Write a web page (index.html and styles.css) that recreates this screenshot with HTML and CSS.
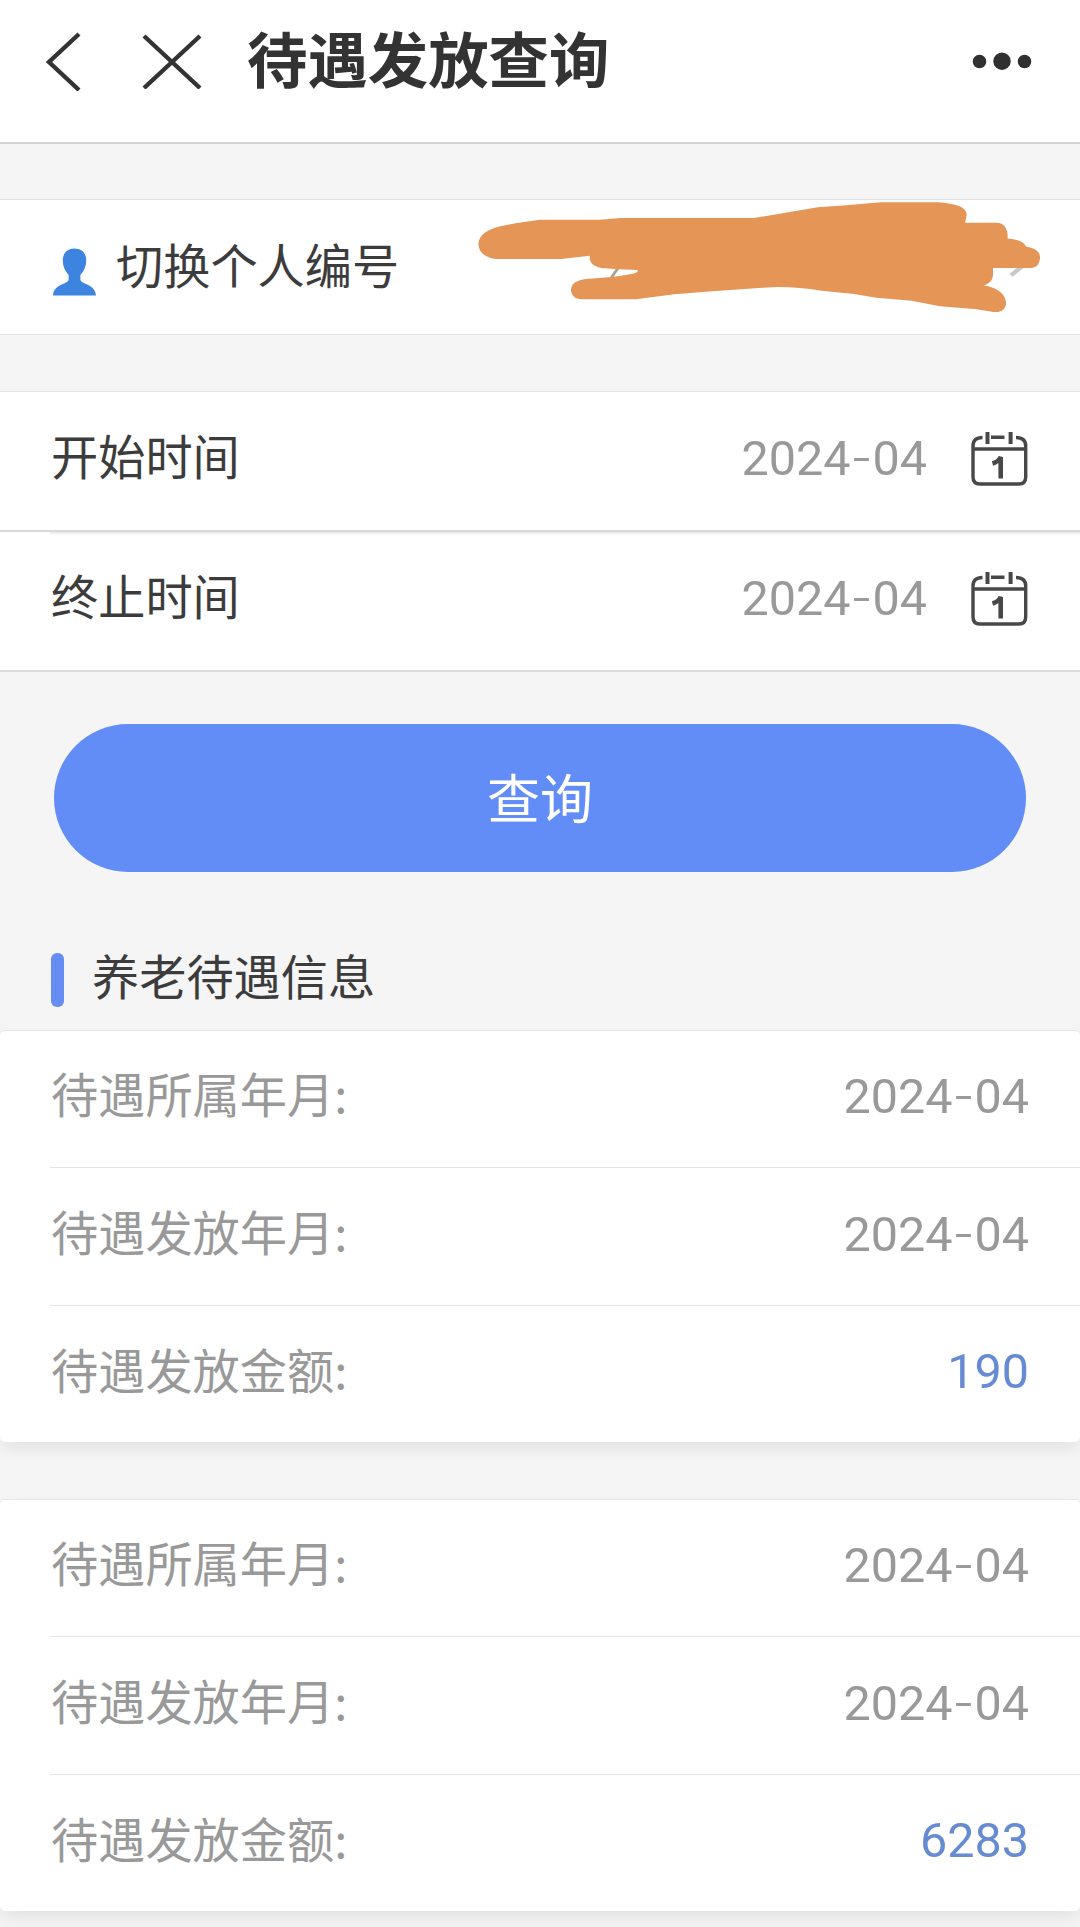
FILE: index.html
```html
<!DOCTYPE html>
<html lang="zh-CN">
<head>
<meta charset="utf-8">
<title>待遇发放查询</title>
<link rel="stylesheet" href="styles.css">
</head>
<body>
<header class="navbar">
  <svg class="nav-back" viewBox="0 0 36 60"><path d="M34 3 4 31 34 59"/></svg>
  <svg class="nav-close" viewBox="0 0 60 56"><path d="M2 3 58 55M58 3 2 55"/></svg>
  <h1 class="nav-title">待遇发放查询</h1>
  <svg class="nav-more" viewBox="0 0 60 20"><circle cx="7.500" cy="10.500" r="6.800"/><circle cx="30" cy="10.200" r="8.700"/><circle cx="52.500" cy="10.500" r="6.800"/></svg>
</header>

<main>
  <section class="account">
    <svg class="account-icon" viewBox="0 0 44 48"><path d="M22 0C29.500 0 34 5 34 12C34 18 32 23 28 27V32C29 37 43 36 44 48H0C1 36 15 37 16 32V27C12 23 10 18 10 12C10 5 14.500 0 22 0Z"/></svg>
    <span class="label">切换个人编号</span>
    <svg class="scribble" viewBox="0 0 1568 420" preserveAspectRatio="none">
      <path class="mark" d="M412 236 396 262"/>
      <path class="mark mark-light" d="M1470 228 1440 256"/>
      <path class="ink" d="M48 162C50 132 72 120 100 110C135 101 170 95 208 89H365L420 84H768L935 52L1010 46L1100 37H1248C1290 40 1326 50 1324 76L1320 98H1405C1424 100 1433 120 1431 146C1450 146 1472 153 1480 170C1505 174 1516 186 1516 204C1514 224 1506 234 1492 234H1393V254C1392 272 1384 280 1368 286C1410 294 1428 318 1427 342C1424 360 1414 368 1394 366L1350 358L1254 349L1180 332L1088 323L1030 312L945 302C905 294 870 292 830 291L780 294L660 304L560 313L460 328H315C298 326 290 314 290 298C292 280 305 270 330 267L395 261C425 256 470 252 464 240L415 238L370 234C346 228 338 218 339 197L265 207H95C65 204 49 186 48 162Z"/>
    </svg>
  </section>

  <section class="period">
    <div class="period-row">
      <span class="label">开始时间</span>
      <span class="value">2024<i class="dash">-</i>04</span>
      <svg class="calendar" viewBox="0 0 58 56"><path d="M11.500 5.500Q2 5.500 2 14V45Q2 52 9 52H47.700Q54.700 52 54.700 45V14Q54.700 5.500 45 5.500M2 17H54.700M20 5.200H33.500"/><path class="rings" d="M16.500 0V12M39.600 0V12"/><path class="one" d="M21.500 31.500Q27 30 29.700 25V46.500"/></svg>
    </div>
    <div class="period-row">
      <span class="label">终止时间</span>
      <span class="value">2024<i class="dash">-</i>04</span>
      <svg class="calendar" viewBox="0 0 58 56"><path d="M11.500 5.500Q2 5.500 2 14V45Q2 52 9 52H47.700Q54.700 52 54.700 45V14Q54.700 5.500 45 5.500M2 17H54.700M20 5.200H33.500"/><path class="rings" d="M16.500 0V12M39.600 0V12"/><path class="one" d="M21.500 31.500Q27 30 29.700 25V46.500"/></svg>
    </div>
  </section>

  <button class="query">查询</button>

  <h2 class="section-title"><span>养老待遇信息</span></h2>

  <section class="record">
    <div class="record-row"><span class="label">待遇所属年月:</span><span class="value">2024<i class="dash">-</i>04</span></div>
    <div class="record-row"><span class="label">待遇发放年月:</span><span class="value">2024<i class="dash">-</i>04</span></div>
    <div class="record-row"><span class="label">待遇发放金额:</span><span class="value amount">190</span></div>
  </section>
  <section class="record">
    <div class="record-row"><span class="label">待遇所属年月:</span><span class="value">2024<i class="dash">-</i>04</span></div>
    <div class="record-row"><span class="label">待遇发放年月:</span><span class="value">2024<i class="dash">-</i>04</span></div>
    <div class="record-row"><span class="label">待遇发放金额:</span><span class="value amount">6283</span></div>
  </section>
</main>
</body>
</html>
```

FILE: styles.css
```css
* { box-sizing: border-box; }

body {
  margin: 0;
  height: 1927px;
  overflow: hidden;
  background: #f5f5f5;
  color: #3c3c3c;
  font: 47.2px/64px "Noto Sans CJK SC", sans-serif;
}

.navbar {
  display: flex;
  align-items: center;
  height: 144px;
  padding: 0 48px 20px 45px;
  background: #fff;
  border-bottom: 2px solid #d2d2d2;
}
.navbar svg { flex: none; }
.nav-back { width: 36px; height: 60px; }
.nav-close { width: 60px; height: 56px; margin-left: 61px; }
.nav-back path, .nav-close path { fill: none; stroke: #333; stroke-width: 4.4; }
.nav-title {
  margin: 0 0 0 45px;
  padding-bottom: 9px;
  font-size: 60.4px;
  line-height: 80px;
  font-weight: 700;
  color: #333;
}
.nav-more { width: 60px; height: 20px; margin-left: auto; fill: #303030; }

.label { padding-bottom: 7px; }

.account {
  position: relative;
  display: flex;
  align-items: center;
  height: 136px;
  margin-top: 55px;
  padding: 0 53px;
  background: #fff;
  border-top: 1px solid #e2e2e2;
  border-bottom: 1px solid #e2e2e2;
}
.account-icon { width: 43px; height: 48px; margin: 9px 20px 0 0; fill: #3d84e0; }
.scribble { position: absolute; left: 460px; top: -10px; width: 600px; height: 140px; }
.ink { fill: #e59555; }
.mark { stroke: #aaa48f; stroke-width: 8; }
.mark-light { stroke: #c5cac8; stroke-width: 12; }

.period {
  margin-top: 56px;
  background: #fff;
  border-top: 1px solid #e4e4e4;
  border-bottom: 2px solid #dcdcdc;
}
.period-row {
  display: flex;
  align-items: center;
  height: 138px;
  padding: 0 51px 6px;
}
.period-row + .period-row {
  height: 140px;
  border-top: 2px solid #d9d9d9;
  background: linear-gradient(#e6e6e6, #fff) 50px 0 / 100% 3px no-repeat;
}

.value {
  margin-left: auto;
  font-family: Roboto, sans-serif;
  font-size: 48.5px;
  color: #999;
}
.dash { font-family: Inter, sans-serif; font-style: normal; font-weight: 300; }
.calendar { width: 58px; height: 56px; margin: 4px 0 0 44px; fill: none; stroke: #484848; stroke-width: 3.4; }
.rings { stroke-width: 4; }
.one { stroke-width: 4.6; }

.query {
  display: block;
  width: 972px;
  height: 148px;
  margin: 52px auto 0;
  padding: 0 0 5px;
  border: 0;
  border-radius: 74px;
  background: #628df7;
  color: #fff;
  font: 53px/80px "Noto Sans CJK SC", sans-serif;
}

.section-title {
  display: flex;
  align-items: center;
  gap: 28px;
  height: 64px;
  margin: 76px 51px 18px;
  font-size: 47.2px;
  font-weight: 400;
}
.section-title span { padding-bottom: 10px; }
.section-title::before {
  content: "";
  width: 13px;
  height: 54px;
  border-radius: 6px;
  background: #668df2;
}

.record {
  height: 412px;
  background: #fff;
  border-top: 1px solid #e4e4e4;
  border-radius: 5px;
  box-shadow: 0 8px 16px rgba(0, 0, 0, .07);
  color: #999;
}
.record + .record { margin-top: 57px; }
.record-row {
  display: flex;
  align-items: center;
  height: 138px;
  margin-left: 50px;
  padding: 0 51px 5px 1px;
}
.record-row:first-child { height: 136px; }
.record-row + .record-row { border-top: 1px solid #e5e5e5; }
.amount { color: #668bd2; }
```
